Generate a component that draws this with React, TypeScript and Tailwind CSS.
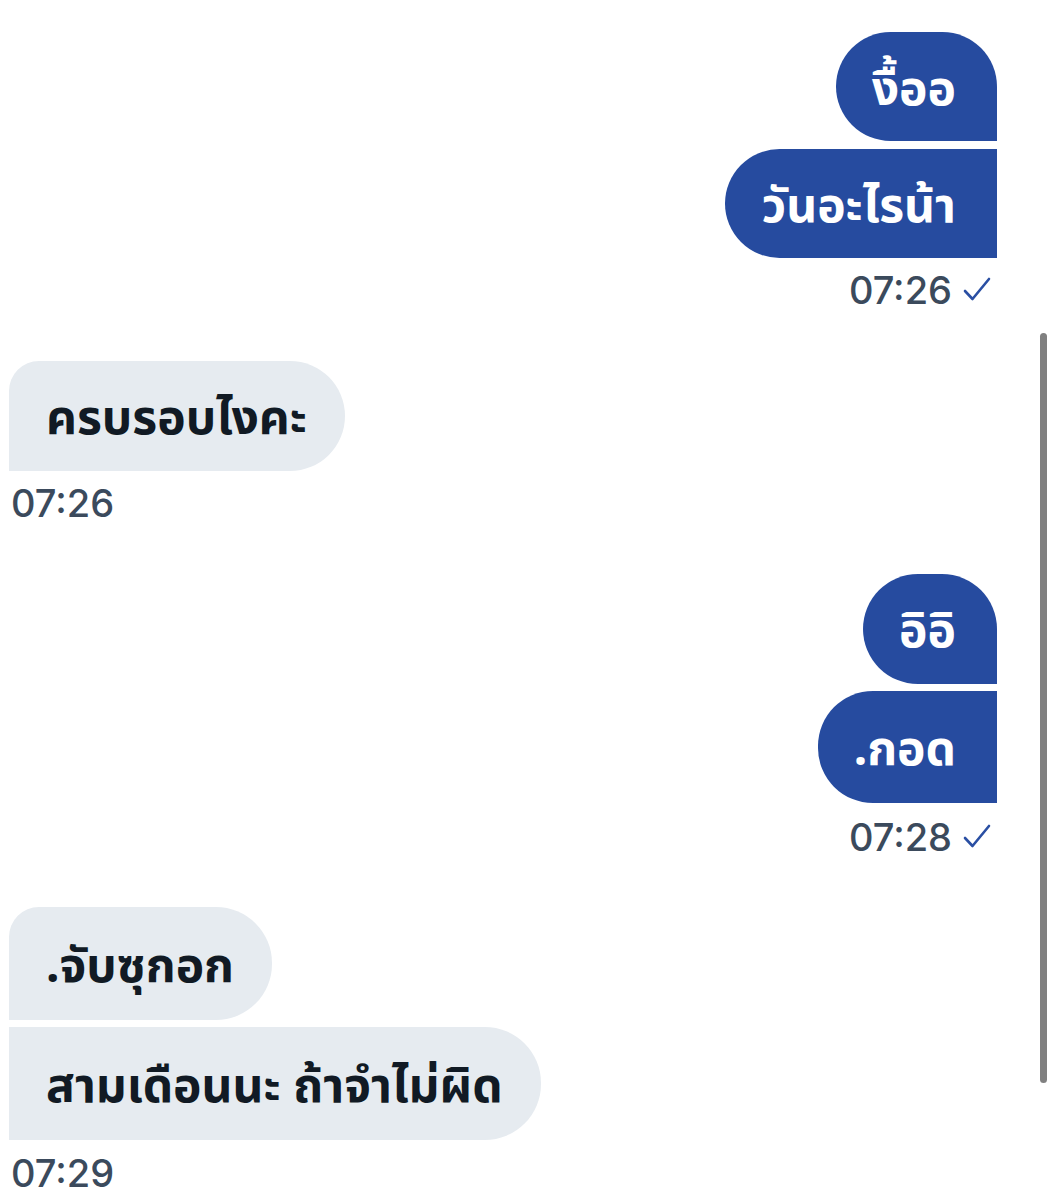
import React from "react";

const thai = { fontFamily: '"Noto Sans", "Noto Sans Thai", "Noto Sans Thai UI", "Loma", "Garuda", sans-serif' };
const num = { fontFamily: 'Inter, "Liberation Sans", sans-serif' };

function Check() {
  return (
    <svg width="30" height="30" viewBox="0 0 30 30" fill="none" className="ml-[10px]">
      <path d="M3 16 L10.5 24 L27 4" stroke="#2a4fa3" strokeWidth="2.6" strokeLinecap="round" strokeLinejoin="round" />
    </svg>
  );
}

function Sent({ text, shape, h }: { text: string; shape: string; h: string }) {
  return (
    <div className={`bg-[#264b9f] text-white font-bold text-[48px] leading-none flex items-center pl-[36px] pr-[41px] ${h} ${shape}`} style={thai}>
      {text}
    </div>
  );
}

function Recv({ text, shape, h }: { text: string; shape: string; h: string }) {
  return (
    <div className={`bg-[#e6ebf0] text-[#111a24] font-bold text-[48px] leading-none flex items-center pl-[37px] pr-[38px] ${h} ${shape}`} style={thai}>
      {text}
    </div>
  );
}

function Time({ t, check }: { t: string; check?: boolean }) {
  return (
    <div className="flex items-center h-[30px] text-[38px] leading-[30px] text-[#3b4a5c] font-medium" style={num}>
      <span>{t}</span>
      {check && <Check />}
    </div>
  );
}

export default function App() {
  return (
    <div className="relative w-[1057px] min-h-[1192px] bg-white">
      <div className="flex flex-col pl-[9px] pr-[60px] pt-[32px]">
        <div className="flex flex-col items-end gap-[8px]">
          <Sent text="งื้ออ" h="h-[109px]" shape="rounded-tl-[55px] rounded-tr-[55px] rounded-bl-[55px]" />
          <Sent text="วันอะไรน้า" h="h-[109px]" shape="rounded-l-[55px]" />
        </div>
        <div className="flex justify-end mt-[17px] pr-[5px]">
          <Time t="07:26" check />
        </div>

        <div className="flex flex-col items-start mt-[56px]">
          <Recv text="ครบรอบไงคะ" h="h-[110px]" shape="rounded-tl-[30px] rounded-r-[55px]" />
        </div>
        <div className="flex mt-[17px] pl-[2px]">
          <Time t="07:26" />
        </div>

        <div className="flex flex-col items-end gap-[7px] mt-[56px]">
          <Sent text="อิอิ" h="h-[110px]" shape="rounded-tl-[55px] rounded-tr-[55px] rounded-bl-[55px]" />
          <Sent text=".กอด" h="h-[112px]" shape="rounded-l-[55px]" />
        </div>
        <div className="flex justify-end mt-[19px] pr-[5px]">
          <Time t="07:28" check />
        </div>

        <div className="flex flex-col items-start gap-[7px] mt-[55px]">
          <Recv text=".จับซุกอก" h="h-[113px]" shape="rounded-tl-[30px] rounded-r-[56px]" />
          <Recv text="สามเดือนนะ ถ้าจำไม่ผิด" h="h-[113px]" shape="rounded-r-[56px]" />
        </div>
        <div className="flex mt-[18px] pl-[2px]">
          <Time t="07:29" />
        </div>
      </div>
      <div className="absolute left-[1040px] top-[333px] w-[7px] h-[750px] rounded-full bg-[#808080]" />
    </div>
  );
}
